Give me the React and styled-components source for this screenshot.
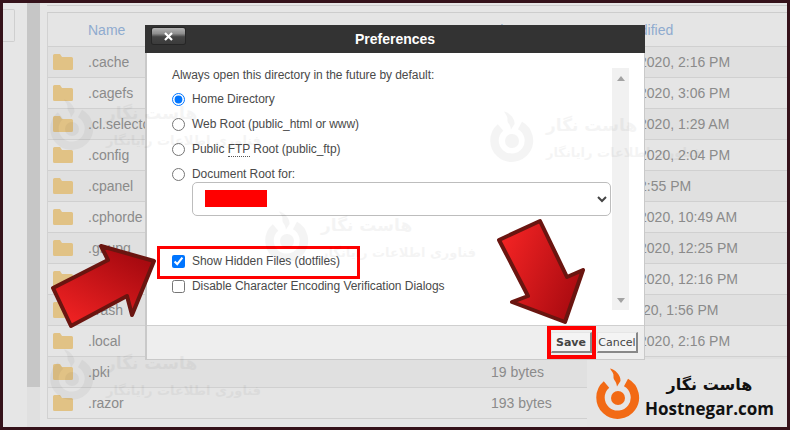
import React from "react";
import styled, { createGlobalStyle } from "styled-components";

const Global = createGlobalStyle`
  html, body { margin: 0; padding: 0; background: #35121a; }
  * { box-sizing: border-box; }
  body { font-family: "Liberation Sans", Arial, sans-serif; }
`;

const Frame = styled.div`
  position: relative;
  width: 790px;
  height: 430px;
  overflow: hidden;
  border: 3px solid #35121a;
  background: #e6e6e6;
  display: flex;
`;

const Sidebar = styled.div`
  width: 24px;
  flex: none;
  padding-top: 6px;
`;
const SideBox = styled.div`
  height: 33px;
  width: 12px;
  border: 1px solid #cfcfcf;
  border-left: 0;
  border-radius: 0 2px 2px 0;
`;
const Gutter = styled.div`
  width: 13px;
  flex: none;
  height: 100%;
  background: linear-gradient(#c6c6c6 0, #c6c6c6 384px, #e0e0e0 384px);
`;
const Main = styled.div`
  flex: 1;
  min-width: 0;
  padding: 2px 0 0 7px;
  display: flex;
  flex-direction: column;
  overflow: hidden;
`;
const TopRule = styled.div`
  height: 7px;
  border-top: 1px solid #cdcdcd;
  flex: none;
`;
const Table = styled.div`
  border-top: 1px solid #cdcdcd;
  border-left: 1px solid #d2d2d2;
  flex: none;
`;
const Row = styled.div`
  display: grid;
  grid-template-columns: 40px 403px 99px 1fr;
  height: ${(p) => (p.$head ? "34px" : "31px")};
  align-items: center;
  font-size: 14px;
  color: ${(p) => (p.$head ? "#8fabcf" : "#8b8b8b")};
  background: ${(p) => (p.$alt ? "#e0e0e0" : "#e5e5e5")};
  border-bottom: 1px solid #d0d0d0;
  white-space: nowrap;
`;
const FolderCell = styled.div`
  display: flex;
  padding-left: 5px;
`;
const Folder = () => (
  <svg width="20" height="16" viewBox="0 0 20 16">
    <path d="M0 1.5Q0 0 1.5 0H7L9 3H18.5Q20 3 20 4.5V14.5Q20 16 18.5 16H1.5Q0 16 0 14.5Z" fill="#e1c285" />
  </svg>
);

const Watermarks = styled.div`
  position: absolute;
  inset: -3px;
  pointer-events: none;
  z-index: 5;
`;
const Mark = styled.div`
  position: absolute;
  left: ${(p) => p.$x}px;
  top: ${(p) => p.$y}px;
  display: flex;
  align-items: center;
  gap: 12px;
  opacity: 0.04;
  color: #000;
`;
const MarkText = styled.div`
  direction: rtl;
  text-align: left;
  font-family: "DejaVu Sans", sans-serif;
  font-weight: 700;
  line-height: 1.8;
`;
const MarkTop = styled.div`font-size: 17px;`;
const MarkBottom = styled.div`font-size: 13px;`;

const LogoMark = ({ size = 44, color = "#f26a15" }) => (
  <svg width={size} height={size * 1.16} viewBox="0 0 44 51" fill="none">
    <path d="M10.5 16.5A17.2 17.2 0 1 0 30 14.5" stroke={color} strokeWidth="8.4" />
    <path d="M14 0.5C19 1.5 25 7 24.5 13L21 18.5C20.5 13 17 12 17.5 8.5C18 5.5 15.5 3 14 0.5Z" fill={color} />
    <circle cx="22" cy="30" r="7" fill={color} />
  </svg>
);

const Dialog = styled.div`
  position: absolute;
  left: 142px;
  top: 22px;
  width: 500px;
  height: 335px;
  z-index: 2;
  display: flex;
  flex-direction: column;
  background: #fff;
  border: solid #c9c9c9;
  border-width: 0 1px 1px 2px;
`;
const TitleBar = styled.div`
  height: 28px;
  margin-left: -2px;
  width: 500px;
  flex: none;
  background: #333;
  color: #fff;
  position: relative;
  display: flex;
  align-items: center;
  justify-content: center;
  font-weight: 700;
  font-size: 14px;
`;
const CloseBtn = styled.button`
  position: absolute;
  left: 7px;
  top: 3px;
  width: 33px;
  height: 16px;
  padding: 0;
  border: 0;
  border-radius: 2px;
  background: linear-gradient(#b4b4b4 0, #8e8e8e 35%, #454545 55%, #3b3b3b 100%);
  box-shadow: 0 0 0 1px #262626;
  color: #fff;
  display: flex;
  align-items: center;
  justify-content: center;
`;
const Body = styled.div`
  flex: 1;
  display: flex;
  padding: 15px 15px 15px 25px;
  min-height: 0;
`;
const Form = styled.div`
  flex: 1;
  min-width: 0;
  font-size: 12px;
  color: #4a4a4a;
  letter-spacing: -0.05px;
`;
const Lead = styled.div`
  height: 16px;
  line-height: 14px;
  margin-bottom: 3px;
`;
const Option = styled.label`
  display: flex;
  align-items: center;
  gap: 7px;
  height: 25px;
  line-height: 25px;
  white-space: nowrap;
`;
const Radio = styled.input.attrs({ type: "radio" })`
  width: 13px;
  height: 13px;
  margin: 0;
  accent-color: #0075ff;
`;
const Check = styled.input.attrs({ type: "checkbox" })`
  width: 13px;
  height: 13px;
  margin: 0;
  accent-color: #0075ff;
`;
const Abbr = styled.span`
  border-bottom: 1px dotted #555;
  line-height: 12px;
`;
const SelectWrap = styled.div`
  position: relative;
  margin: -5px 0 0 20px;
  width: 419px;
`;
const Select = styled.select`
  display: block;
  width: 100%;
  height: 34px;
  background: #fff;
  border: 1px solid #bdbdbd;
  border-radius: 5px;
  font-size: 12px;
  color: #444;
`;
const Redact = styled.div`
  position: absolute;
  left: 13px;
  top: 8px;
  width: 62px;
  height: 17px;
  background: #f00;
`;
const HiddenOption = styled.div`
  position: relative;
  margin-top: 33px;
`;
const RedBox = styled.div`
  position: absolute;
  left: -15px;
  top: -3px;
  width: 203px;
  height: 33px;
  border: 3px solid #f00;
  pointer-events: none;
`;
const ScrollTrack = styled.div`
  width: 17px;
  flex: none;
  background: #f1f1f1;
  display: flex;
  flex-direction: column;
  justify-content: space-between;
  align-items: center;
  padding: 8px 0 7px;
`;
const ArrowTri = styled.div`
  width: 0;
  height: 0;
  border-left: 4px solid transparent;
  border-right: 4px solid transparent;
  ${(p) => (p.$down ? "border-top: 5px solid #a3a3a3;" : "border-bottom: 5px solid #a3a3a3;")}
`;
const Footer = styled.div`
  height: 34px;
  flex: none;
  background: #eee;
  border-top: 1px solid #cfcfcf;
  display: flex;
  justify-content: flex-end;
  align-items: flex-start;
  gap: 5px;
  padding: 6px 6px 0 0;
`;
const Btn = styled.button`
  height: 21px;
  padding: 0;
  width: ${(p) => p.$w}px;
  font-family: "DejaVu Sans", sans-serif;
  font-size: 11px;
  font-weight: ${(p) => (p.$primary ? 700 : 400)};
  color: #444;
  background: #f4f4f4;
  border: solid;
  border-color: #e6e6e6 #888 #888 #e6e6e6;
  border-width: 1px 2px 2px 1px;
`;
const SaveBox = styled.div`
  position: relative;
  display: flex;
`;
const SaveRing = styled.div`
  position: absolute;
  left: -4px;
  top: -6px;
  width: 49px;
  height: 33px;
  border: 4px solid #f00;
  pointer-events: none;
`;

const Arrow = styled.svg`
  position: absolute;
  left: -3px;
  top: -3px;
  z-index: 6;
  pointer-events: none;
`;

const Brand = styled.div`
  position: absolute;
  left: 593px;
  top: 365px;
  z-index: 7;
  display: flex;
  align-items: flex-start;
  gap: 5px;
`;
const BrandText = styled.div`
  display: flex;
  flex-direction: column;
  align-items: center;
  color: #111;
  margin-top: 4px;
`;
const BrandFa = styled.div`
  direction: rtl;
  font-family: "DejaVu Sans", sans-serif;
  font-weight: 700;
  font-size: 16px;
  line-height: 26px;
`;
const BrandEn = styled.div`
  font-family: "Open Sans", sans-serif;
  font-weight: 700;
  font-size: 17px;
  line-height: 22px;
`;
const BrandPad = styled.div`
  background: #e5e5e5;
  position: absolute;
  left: 584px;
  top: 356px;
  width: 200px;
  height: 68px;
  z-index: 1;
`;

const rows = [
  [".cache", "", "Apr 27, 2020, 2:16 PM"],
  [".cagefs", "", "Apr 27, 2020, 3:06 PM"],
  [".cl.selector", "", "Apr 27, 2020, 1:29 AM"],
  [".config", "", "Apr 27, 2020, 2:04 PM"],
  [".cpanel", "", "Apr 27, 2:55 PM"],
  [".cphorde", "", "Apr 27, 2020, 10:49 AM"],
  [".gnupg", "", "Apr 27, 2020, 12:25 PM"],
  [".htpasswds", "", "Apr 27, 2020, 12:16 PM"],
  [".trash", "", "Jul 9, 2020, 1:56 PM"],
  [".local", "", "Apr 27, 2020, 2:16 PM"],
  [".pki", "19 bytes", ""],
  [".razor", "193 bytes", ""],
];

export default function App() {
  return (
    <>
      <Global />
      <Frame>
        <Sidebar><SideBox /></Sidebar>
        <Gutter />
        <Main>
          <TopRule />
          <Table>
            <Row $head>
              <span />
              <span>Name</span>
              <span>Size</span>
              <span>Last Modified</span>
            </Row>
            {rows.map((r, i) => (
              <Row key={r[0]} $alt={i % 2 === 0}>
                <FolderCell><Folder /></FolderCell>
                <span>{r[0]}</span>
                <span>{r[1]}</span>
                <span>{r[2]}</span>
              </Row>
            ))}
          </Table>
        </Main>

        <BrandPad />

        <Dialog>
          <TitleBar>
            <CloseBtn aria-label="Close">
              <svg width="9" height="9" viewBox="0 0 9 9"><path d="M1 1L8 8M8 1L1 8" stroke="#fff" strokeWidth="2.2" /></svg>
            </CloseBtn>
            Preferences
          </TitleBar>
          <Body>
            <Form>
              <Lead>Always open this directory in the future by default:</Lead>
              <Option><Radio name="d" defaultChecked />Home Directory</Option>
              <Option><Radio name="d" />Web Root (public_html or www)</Option>
              <Option><Radio name="d" /><span>Public <Abbr>FTP</Abbr> Root (public_ftp)</span></Option>
              <Option><Radio name="d" />Document Root for:</Option>
              <SelectWrap>
                <Select><option></option></Select>
                <Redact />
              </SelectWrap>
              <HiddenOption>
                <Option><Check defaultChecked />Show Hidden Files (dotfiles)</Option>
                <RedBox />
              </HiddenOption>
              <Option><Check />Disable Character Encoding Verification Dialogs</Option>
            </Form>
            <ScrollTrack>
              <ArrowTri />
              <ArrowTri $down />
            </ScrollTrack>
          </Body>
          <Footer>
            <SaveBox>
              <Btn $primary $w={41}>Save</Btn>
              <SaveRing />
            </SaveBox>
            <Btn $w={41}>Cancel</Btn>
          </Footer>
        </Dialog>

        <Watermarks>
          {[[50, 98], [490, 110], [265, 210], [50, 348]].map(([x, y]) => (
            <Mark key={y} $x={x} $y={y}>
              <LogoMark size={44} color="#000" />
              <MarkText>
                <MarkTop>هاست نگار</MarkTop>
                <MarkBottom>فناوری اطلاعات رایانگار</MarkBottom>
              </MarkText>
            </Mark>
          ))}
        </Watermarks>

        <Arrow width="790" height="430" viewBox="0 0 790 430">
          <defs>
            <linearGradient id="la" x1="0.1" y1="1" x2="0.75" y2="0.1">
              <stop offset="0" stopColor="#f52424" />
              <stop offset="1" stopColor="#a80a10" />
            </linearGradient>
            <linearGradient id="ra" x1="0" y1="0.2" x2="1" y2="0.7">
              <stop offset="0" stopColor="#f52424" />
              <stop offset="1" stopColor="#a80a10" />
            </linearGradient>
          </defs>
          <polygon points="154,261 101,246 108,260 53,288 71,326 127,296 132,315" fill="url(#la)" stroke="#6a1510" strokeWidth="4" strokeLinejoin="round" />
          <polygon points="540,221 499,240 528,296 512,302 565,322 583,270 567,277" fill="url(#ra)" stroke="#6a1510" strokeWidth="4" strokeLinejoin="round" />
        </Arrow>

        <Brand>
          <LogoMark size={44} />
          <BrandText>
            <BrandFa>هاست نگار</BrandFa>
            <BrandEn>Hostnegar.com</BrandEn>
          </BrandText>
        </Brand>
      </Frame>
    </>
  );
}
